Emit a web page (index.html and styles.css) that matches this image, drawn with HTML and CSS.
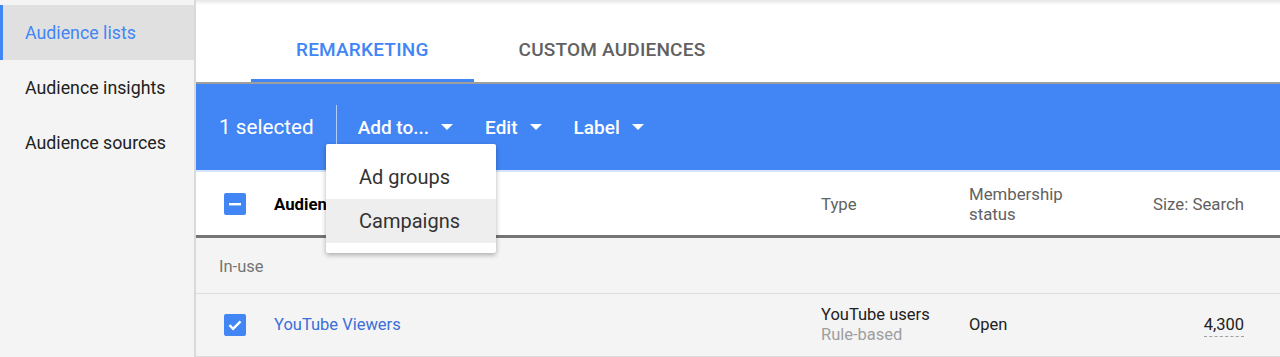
FILE: index.html
```html
<!DOCTYPE html>
<html lang="en">
<head>
    <meta charset="UTF-8">
    <title>Audience manager</title>
    <link rel="stylesheet" href="styles.css">
</head>
<body>
    <div class="app">
        <nav class="sidebar">
            <a class="nav-item active">Audience lists</a>
            <a class="nav-item">Audience insights</a>
            <a class="nav-item">Audience sources</a>
        </nav>
        <main class="content">
            <div class="tabs">
                <div class="tab active">Remarketing</div>
                <div class="tab">Custom audiences</div>
            </div>
            <div class="toolbar">
                <span class="selected-count">1 selected</span>
                <span class="divider"></span>
                <span class="tool">Add to...<i class="caret"></i></span>
                <span class="tool">Edit<i class="caret"></i></span>
                <span class="tool">Label<i class="caret"></i></span>
            </div>
            <div class="table">
                <div class="row head">
                    <div class="cell"><span class="checkbox">
                        <svg width="22" height="22" viewBox="0 0 22 22"><rect x="5" y="10" width="12" height="2.4" fill="#fff"/></svg>
                    </span></div>
                    <div class="cell name-head">Audience name</div>
                    <div class="cell">Type</div>
                    <div class="cell">Membership<br>status</div>
                    <div class="cell num">Size: Search</div>
                </div>
                <div class="group">In-use</div>
                <div class="row data">
                    <div class="cell"><span class="checkbox">
                        <svg width="22" height="22" viewBox="0 0 22 22"><path d="M5.5 11.2l3.6 3.6 7.4-7.4" fill="none" stroke="#fff" stroke-width="2.4"/></svg>
                    </span></div>
                    <div class="cell link">YouTube Viewers</div>
                    <div class="cell type">YouTube users<span class="sub">Rule-based</span></div>
                    <div class="cell">Open</div>
                    <div class="cell num"><span class="size">4,300</span></div>
                </div>
            </div>
            <ul class="menu">
                <li>Ad groups</li>
                <li class="hover">Campaigns</li>
            </ul>
        </main>
    </div>
</body>
</html>
```

FILE: styles.css
```css
body { margin: 0; font-family: Roboto, "Noto Sans", Arial, sans-serif; background: #f4f4f4; height: 357px; overflow: hidden; }
.app { display: flex; height: 357px; }

.sidebar { width: 194px; flex: none; padding-top: 5px; background: #f4f4f4; border-right: 2px solid #d9d9d9; }
.nav-item { display: block; height: 55px; line-height: 55px; padding-left: 25px; font-size: 17.8px; color: #212121; }
.nav-item.active { background: #e0e0e0; color: #4285f4; border-left: 3px solid #4285f4; padding-left: 22px; }

.content { flex: 1; position: relative; min-width: 0; }

.tabs {
    display: flex;
    height: 82px;
    box-sizing: border-box;
    padding: 18px 0 0 55px;
    background: linear-gradient(#e6e6e6, #fff 5px);
}
.tab {
    padding: 0 45px;
    height: 61px;
    line-height: 63px;
    font-size: 19px;
    font-weight: 500;
    letter-spacing: 0.2px;
    text-transform: uppercase;
    color: #616161;
    border-bottom: 3px solid transparent;
}
.tab.active { color: #4285f4; border-bottom-color: #4285f4; }

.toolbar {
    display: flex;
    align-items: center;
    height: 86px;
    padding-left: 23px;
    background: #4285f4;
    border-top: 2px solid #9e9e9e;
    border-bottom: 2px solid #d6e4fd;
    color: #fff;
}
.selected-count { font-size: 20.7px; }
.divider { width: 1px; height: 45px; background: rgba(255,255,255,0.6); margin: 0 21px 0 22px; }
.tool { display: flex; align-items: center; font-size: 19px; font-weight: 500; margin-right: 32px; }
.caret { width: 0; height: 0; margin-left: 12px; border-left: 6px solid transparent; border-right: 6px solid transparent; border-top: 6px solid #fff; }

.row {
    display: grid;
    grid-template-columns: 50px 547px 148px 150px 1fr;
    align-items: center;
    padding: 0 36px 0 28px;
    line-height: 20px;
}
.row.head { height: 63px; background: #fff; border-bottom: 3px solid #757575; font-size: 16.8px; color: #616161; }
.row.data { height: 62px; border-bottom: 1px solid #ddd; font-size: 16.5px; color: #212121; }
.name-head { color: #000; font-weight: 700; }
.num { text-align: right; }
.checkbox { display: block; width: 22px; height: 22px; border-radius: 2px; background: #4285f4; }
.checkbox svg { display: block; }
.link { color: #3b6fd8; }
.type .sub { display: block; color: #9e9e9e; }
.size { border-bottom: 1px dashed #9e9e9e; padding-bottom: 2px; }

.group { height: 55px; line-height: 57px; padding-left: 23px; font-size: 16.5px; color: #757575; border-bottom: 1px solid #ddd; }

.menu {
    position: absolute;
    left: 130px;
    top: 144px;
    width: 170px;
    margin: 0;
    padding: 11px 0 10px;
    list-style: none;
    background: #fff;
    border-radius: 2px;
    box-shadow: 0 2px 5px rgba(0,0,0,0.3);
}
.menu li { height: 44px; line-height: 44px; padding-left: 33px; font-size: 20px; color: #333; }
.menu li.hover { background: #eee; }
```
